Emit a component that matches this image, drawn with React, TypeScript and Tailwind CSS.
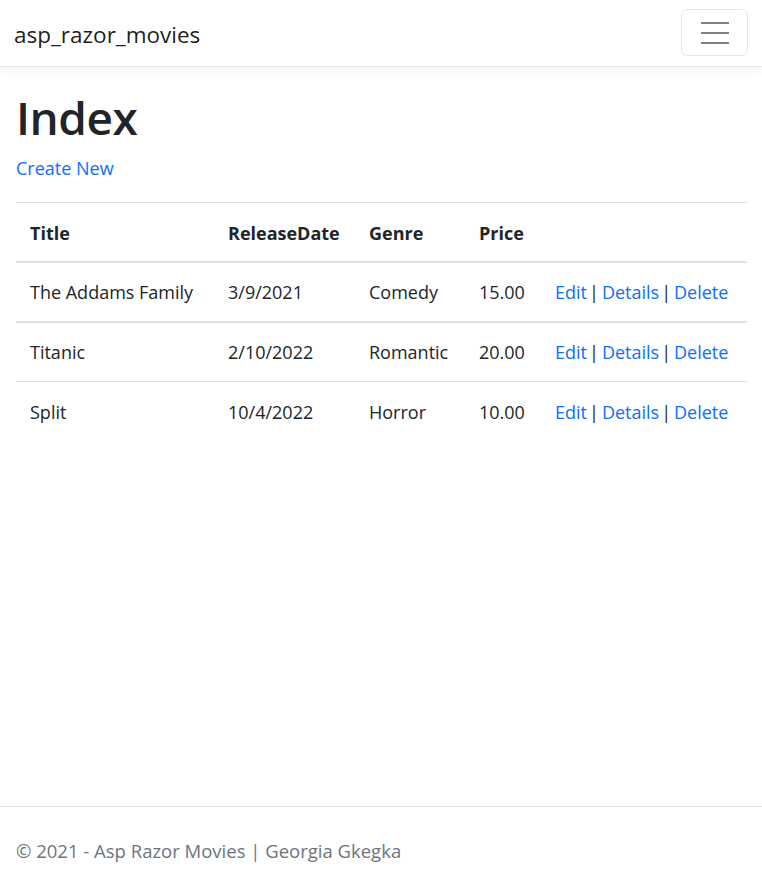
const movies = [
  { title: "The Addams Family", date: "3/9/2021", genre: "Comedy", price: "15.00" },
  { title: "Titanic", date: "2/10/2022", genre: "Romantic", price: "20.00" },
  { title: "Split", date: "10/4/2022", genre: "Horror", price: "10.00" },
];

const rowBorders = [
  "h-[60px] border-b-2 border-[#dee2e6]",
  "h-[60px] border-b border-[#dee2e6]",
  "h-[60px]",
];

export default function App() {
  return (
    <div className="min-h-[884px] flex flex-col bg-white text-[#212529] font-['Open_Sans',sans-serif] text-[18px] leading-[1.5]">
      {/* Navbar */}
      <header className="h-[67px] shrink-0 border-b border-[#e5e5e5] shadow-[0_4px_12px_rgba(0,0,0,0.05)]">
        <div className="h-full flex items-center justify-between pl-[14px] pr-[14px]">
          <a className="text-[22.5px] pt-[3px] text-black/90">asp_razor_movies</a>
          <button className="w-[67px] h-[47px] mt-[-1px] border border-black/10 rounded-md flex items-center justify-center">
            <svg width="30" height="22" viewBox="0 0 30 22">
              <path d="M1 1h28M1 11h28M1 21h28" stroke="#808080" strokeWidth="2" />
            </svg>
          </button>
        </div>
      </header>

      {/* Main */}
      <main className="flex-1 px-4">
        <h1 className="mt-[23px] text-[46px] font-semibold tracking-[-0.5px] leading-[1.2]">Index</h1>
        <p className="mt-[10px] mb-[20px]">
          <a className="text-[#0d6efd]">Create New</a>
        </p>
        <table className="w-full table-fixed border-t border-[#dee2e6]">
          <colgroup>
            <col className="w-[198px]" />
            <col className="w-[141px]" />
            <col className="w-[110px]" />
            <col className="w-[76px]" />
            <col className="w-[206px]" />
          </colgroup>
          <thead>
            <tr className="h-[59px] border-b-2 border-[#dee2e6]">
              <th className="pl-[14px] pt-[3px] text-left font-bold">Title</th>
              <th className="pl-[14px] pt-[3px] text-left font-bold">ReleaseDate</th>
              <th className="pl-[14px] pt-[3px] text-left font-bold">Genre</th>
              <th className="pl-[14px] pt-[3px] text-left font-bold">Price</th>
              <th></th>
            </tr>
          </thead>
          <tbody>
            {movies.map((m, i) => (
              <tr key={m.title} className={rowBorders[i]}>
                <td className="pl-[14px] pt-[2px]">{m.title}</td>
                <td className="pl-[14px] pt-[2px]">{m.date}</td>
                <td className="pl-[14px] pt-[2px]">{m.genre}</td>
                <td className="pl-[14px] pt-[2px]">{m.price}</td>
                <td className="pl-[14px] pt-[2px] whitespace-nowrap">
                  <a className="text-[#0d6efd]">Edit</a>
                  <span className="ml-[2px] mr-[3px]">|</span>
                  <a className="text-[#0d6efd]">Details</a>
                  <span className="ml-[2px] mr-[3px]">|</span>
                  <a className="text-[#0d6efd]">Delete</a>
                </td>
              </tr>
            ))}
          </tbody>
        </table>
      </main>

      {/* Footer */}
      <footer className="h-[78px] shrink-0 border-t border-[#dee2e6] px-4 pt-[30px] text-[18.5px] text-[#6c757d]">
        © 2021 - Asp Razor Movies | Georgia Gkegka
      </footer>
    </div>
  );
}
